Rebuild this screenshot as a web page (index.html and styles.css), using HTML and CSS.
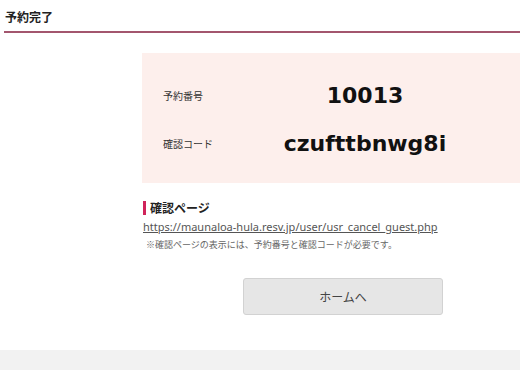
FILE: index.html
```html
<!DOCTYPE html>
<html lang="ja">
<head>
<meta charset="utf-8">
<link rel="stylesheet" href="styles.css">
</head>
<body>
<header class="page-head">
  <h1 class="page-title">予約完了</h1>
</header>
<main class="main">
  <section class="info-box">
    <div class="info-row">
      <div class="info-label">予約番号</div>
      <div class="info-value">10013</div>
    </div>
    <div class="info-row">
      <div class="info-label">確認コード</div>
      <div class="info-value">czufttbnwg8i</div>
    </div>
  </section>
  <section class="confirm">
    <h2 class="confirm-title">確認ページ</h2>
    <a class="confirm-link" href="#">https://maunaloa-hula.resv.jp/user/usr_cancel_guest.php</a>
    <p class="confirm-note">※確認ページの表示には、予約番号と確認コードが必要です。</p>
  </section>
  <div class="actions">
    <a class="btn-home" href="#">ホームへ</a>
  </div>
</main>
<footer class="footer"></footer>
</body>
</html>
```
FILE: styles.css
```css
* { box-sizing: border-box; }
html, body { margin: 0; padding: 0; }
body {
  width: 520px;
  height: 370px;
  overflow: hidden;
  background: #fff;
  font-family: "Noto Sans CJK JP", "Noto Sans", sans-serif;
  color: #222;
  display: flex;
  flex-direction: column;
}
.page-head {
  margin-left: 4px;
  padding: 9px 0 6px 1px;
  border-bottom: 2px solid #a3566e;
}
.page-title {
  margin: 0;
  font-size: 12px;
  line-height: 16px;
  font-weight: bold;
  color: #222;
}
.main {
  flex: 1;
  padding: 20px 0 0 142px;
}
.info-box {
  background: #fdefec;
  height: 130px;
  padding: 25px 0 0 21px;
  display: flex;
  flex-direction: column;
  gap: 14px;
}
.info-row {
  display: grid;
  grid-template-columns: 100px 204px;
  align-items: center;
  height: 34px;
}
.info-label {
  font-size: 10px;
  color: #333;
}
.info-value {
  text-align: center;
  font-family: "DejaVu Sans", Verdana, sans-serif;
  font-weight: bold;
  font-size: 22px;
  color: #111;
}
.confirm {
  padding: 18px 0 0 1px;
}
.confirm-title {
  margin: 0;
  border-left: 3px solid #d0245a;
  padding-left: 4px;
  font-size: 12px;
  line-height: 14px;
  font-weight: bold;
  color: #222;
}
.confirm-link {
  display: block;
  margin-top: 4px;
  font-family: "Noto Sans", "Noto Sans CJK JP", sans-serif;
  font-size: 11px;
  line-height: 16px;
  color: #555;
  text-decoration: underline;
}
.confirm-note {
  margin: 3px 0 0 3px;
  font-size: 9px;
  line-height: 14px;
  color: #666;
}
.actions {
  padding: 26px 0 0 101px;
}
.btn-home {
  display: flex;
  align-items: center;
  justify-content: center;
  width: 200px;
  height: 37px;
  background: #e6e6e6;
  border: 1px solid #d2d2d2;
  border-radius: 3px;
  font-size: 12px;
  color: #444;
  text-decoration: none;
}
.footer {
  height: 20px;
  background: #f2f2f2;
  flex: none;
}
```
